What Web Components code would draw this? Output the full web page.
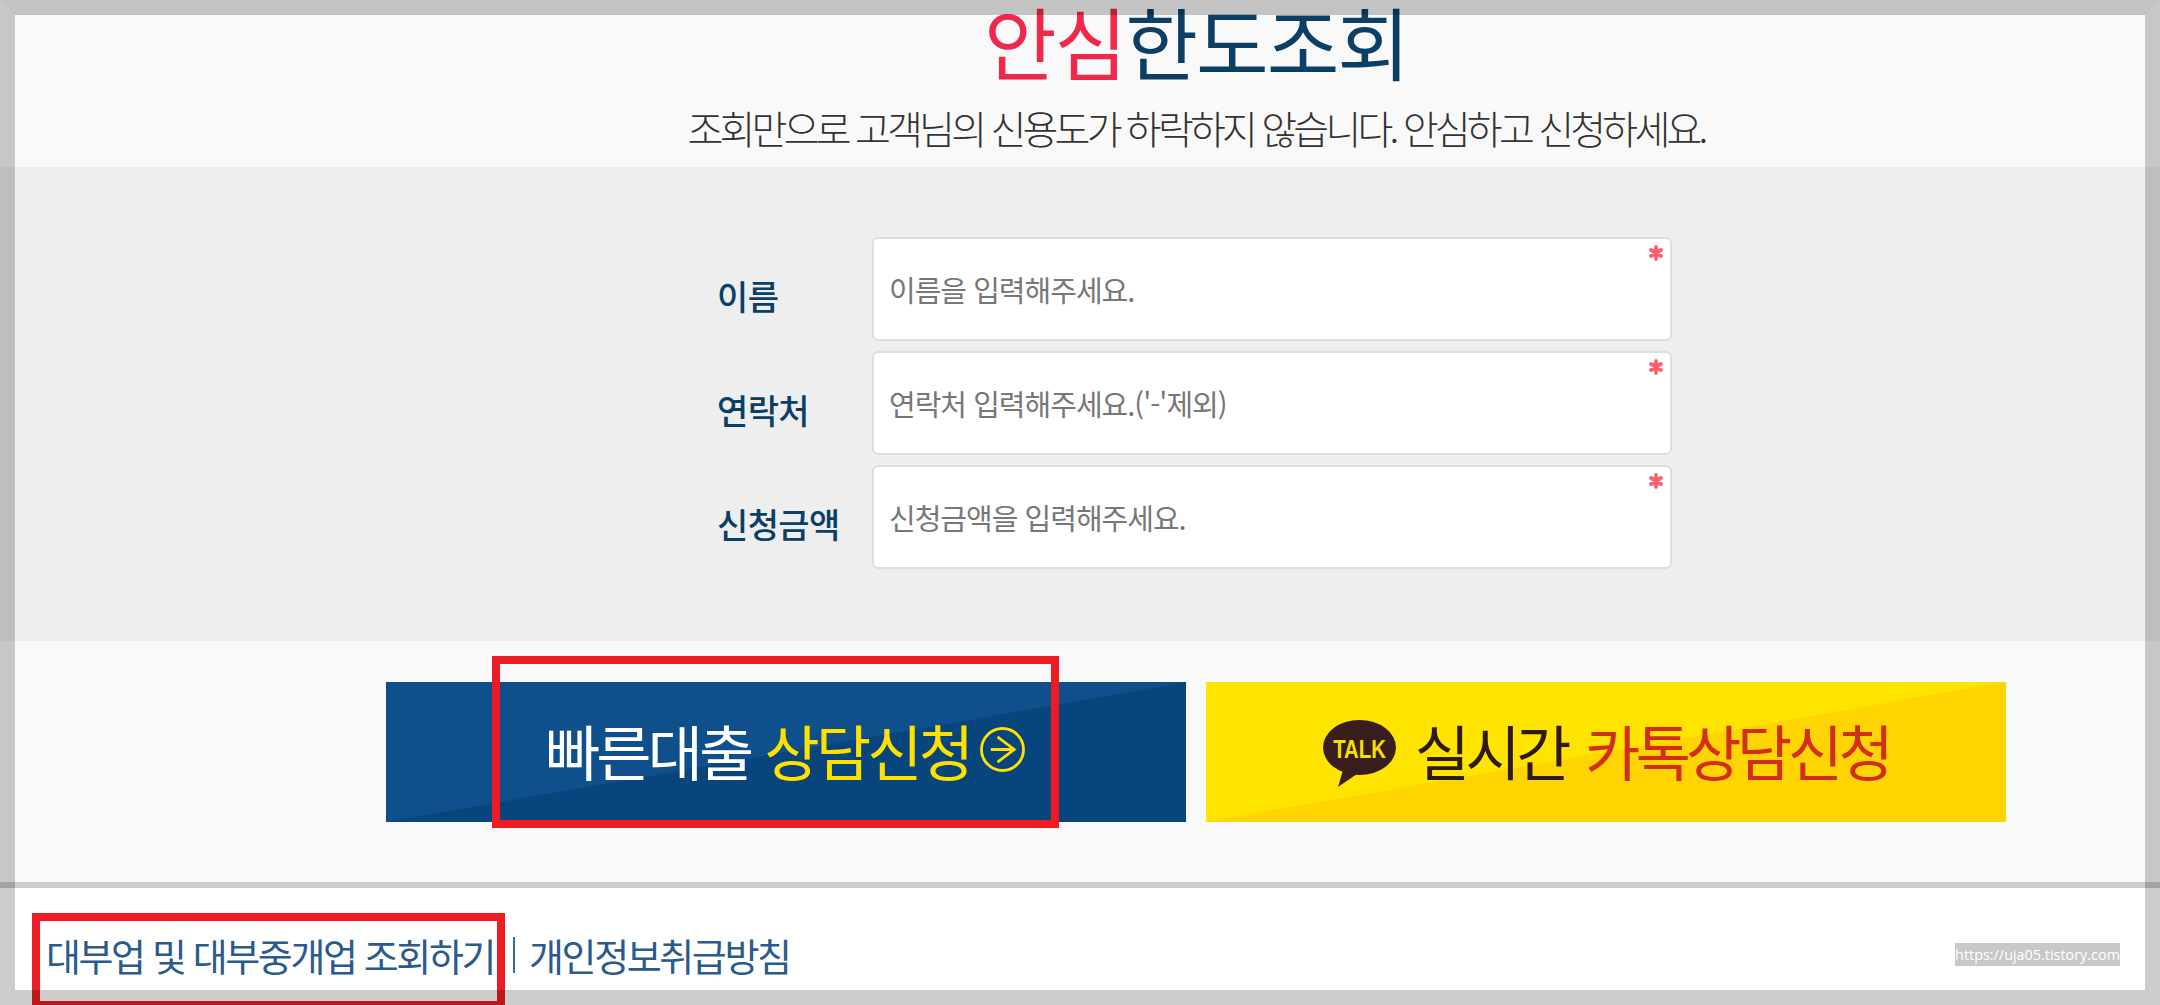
<!DOCTYPE html>
<html lang="ko">
<head>
<meta charset="utf-8">
<title>안심한도조회</title>
<style>
  html, body { margin: 0; height: 100%; overflow: hidden; background: #fff; }
  body { font-family: "Noto Sans CJK KR", "Noto Sans", sans-serif; }
</style>
</head>
<body>
<template id="hero-tpl">
  <style>
    :host { display: block; height: 167px; background: #f9f9f9; overflow: hidden; }
    .inner { margin-left: 386px; width: 1620px; display: flex; flex-direction: column; align-items: center; }
    h1 { margin: 0; padding-top: 2px; font-family: "Liberation Sans", "Noto Sans CJK KR", sans-serif; font-size: 79px; line-height: 92px; font-weight: 400; letter-spacing: -2px; color: #0c3f66; }
    h1 b { font-weight: 400; color: #f0294a; }
    p { margin: 8px 0 0; font-size: 39px; line-height: 50px; font-weight: 300; letter-spacing: -3.8px; color: #333; }
  </style>
  <div class="inner">
    <h1><b>안심</b>한도조회</h1>
    <p>조회만으로 고객님의 신용도가 하락하지 않습니다. 안심하고 신청하세요.</p>
  </div>
</template>

<template id="field-tpl">
  <style>
    :host { display: grid; grid-template-columns: 155px 800px; align-items: center; height: 104px; margin-left: -1px; }
    label { font-size: 34px; line-height: 40px; font-weight: 500; letter-spacing: -.6px; color: #0c3f66; padding-top: 14px; }
    .box {
      position: relative; box-sizing: border-box; height: 104px; padding-left: 15px;
      display: flex; align-items: center;
      background: #fff; border: 2px solid #ddd; border-radius: 6px;
      font-size: 29px; letter-spacing: -1px; color: #777;
    }
    svg { position: absolute; top: 5px; right: 6px; filter: blur(.5px); }
  </style>
  <label></label>
  <div class="box">
    <span class="ph"></span>
    <svg width="16" height="18" viewBox="0 0 16 18" fill="none" stroke="#ff6070" stroke-width="3.8" stroke-linecap="round">
      <path d="M8 3v12M3 6l10 6M13 6L3 12"/>
    </svg>
  </div>
</template>

<template id="cta-tpl">
  <style>
    :host { display: flex; align-items: center; justify-content: center; box-sizing: border-box; width: 800px; height: 140px; padding-bottom: 6px; font-size: 60px; white-space: nowrap; }
    :host([tone="blue"]) { background: linear-gradient(to bottom right, #0f4f8b 50%, #08457c 50%); color: #fff; }
    :host([tone="yellow"]) { background: linear-gradient(to bottom right, #ffe400 50%, #ffd400 50%); color: #2e1a14; }
  </style>
  <slot></slot>
</template>

<template id="footer-tpl">
  <style>
    :host { display: flex; justify-content: space-between; align-items: center; box-sizing: border-box; height: 123px; padding: 0 40px 0 46px; border-top: 6px solid #ccc; background: #fff; }
    nav { display: flex; align-items: center; font-size: 38px; letter-spacing: -2.4px; color: #2a5b8c; margin-top: 16px; }
    i { width: 2px; height: 36px; margin: 0 14px 0 19px; background: #2a6aa8; }
    span { font-family: "Open Sans", sans-serif; font-size: 14.4px; line-height: 23px; background: #c8c8c8; color: #fff; margin-top: 15px; }
  </style>
  <nav><a>대부업 및 대부중개업 조회하기</a><i></i><a>개인정보취급방침</a></nav>
  <span><slot></slot></span>
</template>

<template id="mark-tpl">
  <style>
    :host { position: absolute; box-sizing: border-box; border: 8px solid #ed1c24; }
  </style>
</template>

<template id="frame-tpl">
  <style>
    :host { position: absolute; inset: 0; box-sizing: border-box; border: 15px solid rgba(0,0,0,.2); border-top-color: rgba(0,0,0,.212); }
  </style>
</template>

<app-hero></app-hero>

<main style="display:block;height:474px;background:#eee;box-sizing:border-box;padding:70px 0 0 718px">
  <form-field label="이름" placeholder="이름을 입력해주세요."></form-field>
  <form-field label="연락처" placeholder="연락처 입력해주세요.('-'제외)" style="margin-top:10px"></form-field>
  <form-field label="신청금액" placeholder="신청금액을 입력해주세요." style="margin-top:10px"></form-field>
</main>

<section style="display:flex;gap:20px;height:241px;box-sizing:border-box;padding:41px 0 0 386px;background:#f9f9f9">
  <cta-button tone="blue">
    <span style="letter-spacing:-3.8px">빠른대출</span>
    <span style="color:#ffe100;margin-left:14px;letter-spacing:-3.8px">상담신청</span>
    <svg style="margin:0 2px 0 10px" width="45" height="45" viewBox="0 0 45 45" fill="none" stroke="#ffe100" stroke-width="2.8">
      <circle cx="22.5" cy="22.500" r="21"/>
      <path d="M10.800 22.500H34.200M17.500 9.800L34.200 22.500L17.500 35.200"/>
    </svg>
  </cta-button>
  <cta-button tone="yellow">
    <svg width="74" height="68" viewBox="0 0 74 68" style="margin:10px 18px 0 0">
      <ellipse cx="36.500" cy="27.500" rx="36.500" ry="27.500" fill="#3a1d1d"/>
      <path fill="#3a1d1d" d="M20 50L15 67L34 54Z"/>
      <text transform="translate(36.500 38) scale(.78 1)" text-anchor="middle" font-family="Liberation Sans, sans-serif" font-weight="700" font-size="26" fill="#f5e000">TALK</text>
    </svg>
    <span style="letter-spacing:-4.500px">실시간</span>
    <span style="color:#d22e1e;margin-left:18px;letter-spacing:-4.500px">카톡상담신청</span>
  </cta-button>
</section>

<site-footer>https://uja05.tistory.com</site-footer>

<mark-box style="left:492px;top:656px;width:567px;height:172px"></mark-box>
<mark-box style="left:32px;top:913px;width:473px;height:96px"></mark-box>
<shot-frame></shot-frame>

<script>
  class TemplateElement extends HTMLElement {
    constructor(id) {
      super();
      this.attachShadow({ mode: 'open' });
      this.shadowRoot.appendChild(document.getElementById(id).content.cloneNode(true));
    }
  }

  class AppHero extends TemplateElement {
    constructor() { super('hero-tpl'); }
  }

  class FormField extends TemplateElement {
    constructor() { super('field-tpl'); }
    connectedCallback() {
      this.shadowRoot.querySelector('label').textContent = this.getAttribute('label');
      this.shadowRoot.querySelector('.ph').textContent = this.getAttribute('placeholder');
    }
  }

  class CtaButton extends TemplateElement {
    constructor() { super('cta-tpl'); }
  }

  class SiteFooter extends TemplateElement {
    constructor() { super('footer-tpl'); }
  }

  class MarkBox extends TemplateElement {
    constructor() { super('mark-tpl'); }
  }

  class ShotFrame extends TemplateElement {
    constructor() { super('frame-tpl'); }
  }

  customElements.define('app-hero', AppHero);
  customElements.define('form-field', FormField);
  customElements.define('cta-button', CtaButton);
  customElements.define('site-footer', SiteFooter);
  customElements.define('mark-box', MarkBox);
  customElements.define('shot-frame', ShotFrame);
</script>
</body>
</html>
